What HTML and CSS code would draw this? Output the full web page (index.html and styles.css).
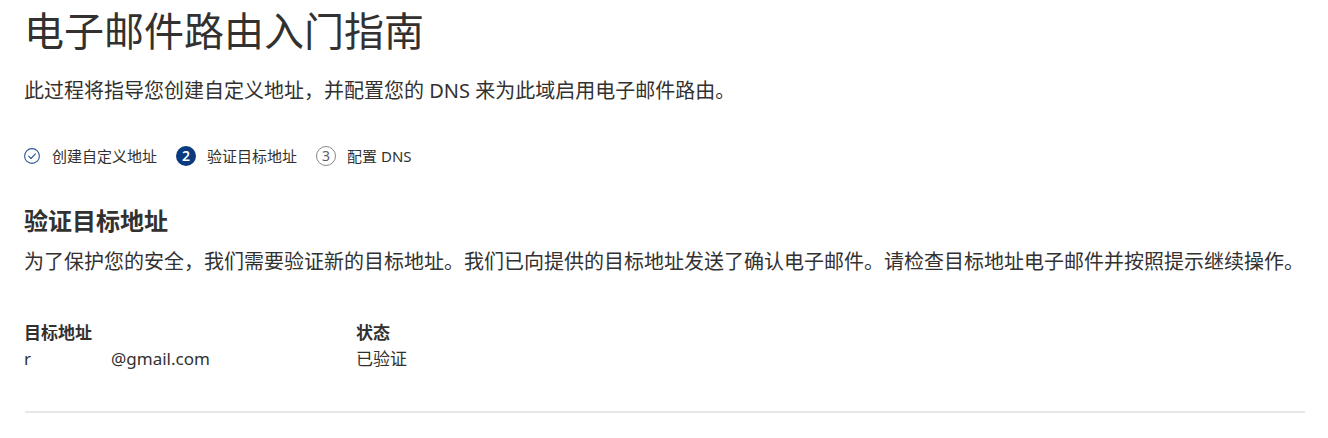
FILE: index.html
```html
<!DOCTYPE html>
<html lang="zh-CN">
<head>
<meta charset="utf-8">
<title>电子邮件路由入门指南</title>
<link rel="stylesheet" href="styles.css">
</head>
<body>
<main class="page">
  <h1 class="title">电子邮件路由入门指南</h1>
  <p class="intro">此过程将指导您创建自定义地址，并配置您的 DNS 来为此域启用电子邮件路由。</p>

  <ol class="steps">
    <li class="step step-done">
      <svg class="step-icon" width="16" height="16" viewBox="0 0 16 16" aria-hidden="true">
        <circle cx="8" cy="8" r="7.4" fill="none" stroke="#2b579a" stroke-width="1.1"/>
        <path d="M4.6 8.2 L7 10.5 L11.4 5.8" fill="none" stroke="#2b579a" stroke-width="1.1" stroke-linecap="round" stroke-linejoin="round"/>
      </svg>
      <span class="step-label">创建自定义地址</span>
    </li>
    <li class="step step-current">
      <span class="step-num">2</span>
      <span class="step-label">验证目标地址</span>
    </li>
    <li class="step step-todo">
      <span class="step-num">3</span>
      <span class="step-label">配置 DNS</span>
    </li>
  </ol>

  <h2 class="section-title">验证目标地址</h2>
  <p class="desc">为了保护您的安全，我们需要验证新的目标地址。我们已向提供的目标地址发送了确认电子邮件。请检查目标地址电子邮件并按照提示继续操作。</p>

  <div class="details">
    <div class="label">目标地址</div>
    <div class="label">状态</div>
    <div class="value">r<span class="redacted"></span>@gmail.com</div>
    <div class="value">已验证</div>
  </div>

  <hr class="divider">
</main>
</body>
</html>
```

FILE: styles.css
```css
html, body {
  margin: 0;
  padding: 0;
  background: #ffffff;
}

body {
  color: #323130;
  font-family: "Noto Sans", "Noto Sans CJK SC", sans-serif;
}

.page {
  padding: 5px 23px 0 24px;
  width: 1281px;
}

.title {
  margin: 0;
  font-size: 40px;
  line-height: 52px;
  font-weight: 400;
  color: #323130;
}

.intro {
  margin: 20px 0 0 0;
  font-size: 20px;
  line-height: 28px;
}

.steps {
  list-style: none;
  margin: 39px 0 0 0;
  padding: 0;
  display: flex;
  align-items: center;
  gap: 19px;
  height: 24px;
}

.step {
  display: flex;
  align-items: center;
  gap: 11px;
  font-size: 15px;
  line-height: 24px;
}

.step-icon {
  display: block;
}

.step-done .step-icon {
  margin-right: 1px;
}

.step-num {
  width: 20px;
  height: 20px;
  box-sizing: border-box;
  border-radius: 50%;
  display: flex;
  align-items: center;
  justify-content: center;
  font-size: 14px;
  line-height: 1;
  font-family: "Noto Sans", sans-serif;
}

.step-current .step-num {
  background: #0b3a7e;
  color: #ffffff;
  font-weight: 600;
}

.step-todo .step-num {
  border: 1px solid #8a8886;
  color: #605e5c;
}

.section-title {
  margin: 37px 0 0 0;
  font-size: 24px;
  line-height: 32px;
  font-weight: 700;
}

.desc {
  margin: 11px 0 0 0;
  font-size: 20px;
  line-height: 28px;
  white-space: nowrap;
}

.details {
  margin-top: 45px;
  display: grid;
  grid-template-columns: 332px auto;
  row-gap: 2px;
  font-size: 17px;
  line-height: 24px;
}

.label {
  font-weight: 700;
}

.value {
  font-weight: 400;
}

.redacted {
  display: inline-block;
  width: 80px;
}

.divider {
  margin: 40px 0 0 1px;
  border: 0;
  height: 2px;
  background: #e8e8e8;
  width: 1280px;
}
```
